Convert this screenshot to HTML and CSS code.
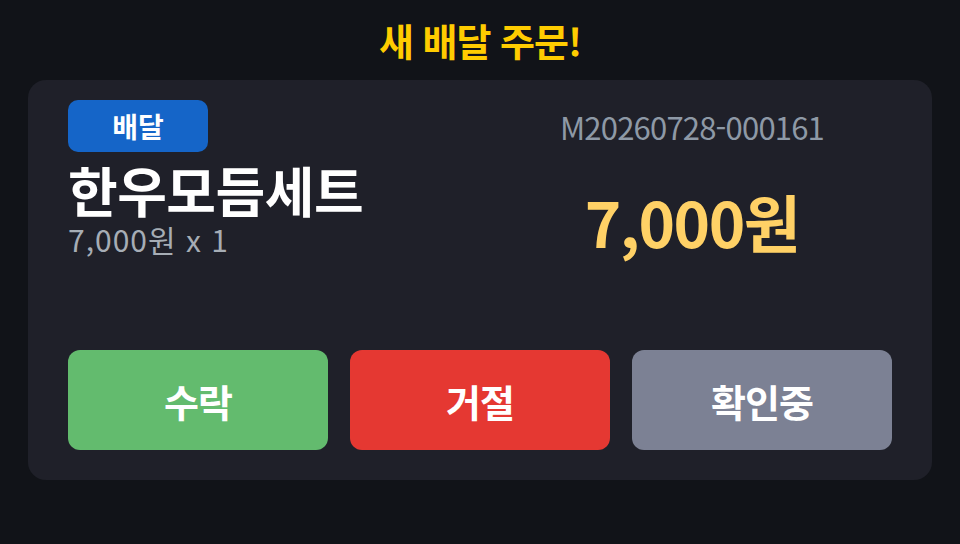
FILE: index.html
```html
<!DOCTYPE html>
<html lang="ko">
<head>
<meta charset="utf-8">
<link rel="stylesheet" href="styles.css">
</head>
<body>
<div class="screen">
  <h1 class="title">새 배달 주문!</h1>
  <div class="card">
    <div class="info">
      <div class="left">
        <span class="badge">배달</span>
        <div class="name">한우모듬세트</div>
        <div class="qty">7,000원 x 1</div>
      </div>
      <div class="right">
        <div class="order-id">M20260728-000161</div>
        <div class="price">7,000원</div>
      </div>
    </div>
    <div class="actions">
      <button class="btn btn-accept">수락</button>
      <button class="btn btn-reject">거절</button>
      <button class="btn btn-pending">확인중</button>
    </div>
  </div>
</div>
</body>
</html>
```

FILE: styles.css
```css
* { box-sizing: border-box; }
html, body {
  margin: 0;
  padding: 0;
  background: #111318;
  font-family: "Noto Sans CJK KR", "Noto Sans", sans-serif;
}
.screen {
  width: 960px;
  height: 544px;
  padding: 0 28px;
}
.title {
  margin: 0;
  height: 80px;
  display: flex;
  align-items: center;
  justify-content: center;
  padding-bottom: 2px;
  color: #ffcc00;
  font-size: 38px;
  font-weight: 700;
  letter-spacing: -1px;
}
.card {
  height: 400px;
  background: #1f2029;
  border-radius: 18px;
  padding: 20px 40px 30px;
  display: flex;
  flex-direction: column;
}
.info {
  display: grid;
  grid-template-columns: 1fr 400px;
}
.left {
  display: flex;
  flex-direction: column;
  align-items: flex-start;
}
.badge {
  display: flex;
  align-items: center;
  justify-content: center;
  width: 140px;
  height: 52px;
  background: #1565c8;
  border-radius: 10px;
  color: #ffffff;
  font-size: 28px;
  font-weight: 700;
}
.name {
  margin-top: 8px;
  color: #ffffff;
  font-size: 54px;
  font-weight: 700;
  line-height: 60px;
  letter-spacing: -0.5px;
}
.qty {
  margin-top: 3px;
  color: #a6adb5;
  font-size: 30px;
  line-height: 32px;
  letter-spacing: 1px;
}
.right {
  display: flex;
  flex-direction: column;
  align-items: center;
}
.order-id {
  height: 52px;
  display: flex;
  align-items: center;
  color: #8e99a6;
  font-size: 31px;
  letter-spacing: -0.8px;
}
.price {
  margin-top: 34px;
  color: #ffd166;
  font-size: 62px;
  font-weight: 700;
  line-height: 70px;
  letter-spacing: -1.5px;
}
.actions {
  margin-top: auto;
  display: grid;
  grid-template-columns: repeat(3, 1fr);
  gap: 22px;
}
.btn {
  height: 100px;
  border: none;
  border-radius: 12px;
  color: #ffffff;
  font-family: inherit;
  font-size: 38px;
  font-weight: 700;
  letter-spacing: -1px;
}
.btn-accept { background: #63bb6e; }
.btn-reject { background: #e53832; }
.btn-pending { background: #7c8194; }
```
